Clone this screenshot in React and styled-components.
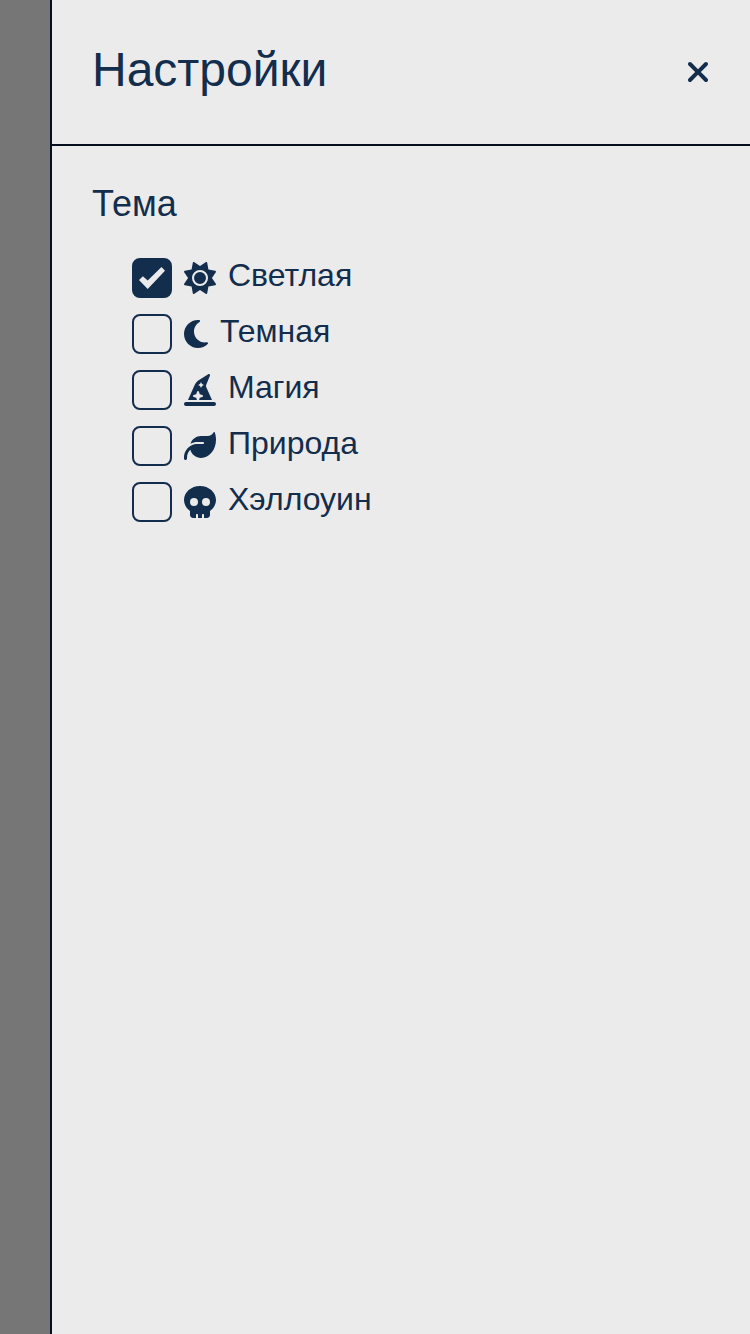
import React from "react";
import styled, { createGlobalStyle } from "styled-components";
import { FaSun, FaMoon, FaHatWizard, FaLeaf, FaSkull, FaXmark } from "react-icons/fa6";

const GlobalStyle = createGlobalStyle`
  * { box-sizing: border-box; }
  body {
    margin: 0;
    background: #767676;
    color: #132d4d;
    font-family: "Liberation Sans", Arial, sans-serif;
  }
`;

const Overlay = styled.div`
  display: flex;
  justify-content: flex-end;
  height: 100vh;
  background: #767676;
`;

const Panel = styled.aside`
  width: 700px;
  background: #ebebeb;
  border-left: 2px solid #050f20;
`;

const Header = styled.header`
  display: flex;
  align-items: flex-start;
  justify-content: space-between;
  height: 146px;
  padding: 40px;
  border-bottom: 2px solid #050f20;
`;

const Title = styled.h1`
  margin: 0;
  font-size: 48px;
  font-weight: 400;
  line-height: 60px;
`;

const CloseButton = styled.button`
  display: flex;
  margin: 16px 0 0;
  padding: 0;
  border: 0;
  background: none;
  color: inherit;

  svg {
    width: 24px;
    height: 32px;
  }
`;

const Section = styled.section`
  padding: 36px 40px;
`;

const SectionTitle = styled.h2`
  margin: 0 0 32px;
  font-size: 36px;
  font-weight: 400;
  line-height: 44px;
`;

const Options = styled.div`
  display: flex;
  flex-direction: column;
  gap: 16px;
  padding-left: 40px;
`;

const Option = styled.label`
  display: flex;
  align-items: center;
  gap: 12px;
  height: 40px;
`;

const Checkbox = styled.span`
  display: flex;
  width: 40px;
  height: 40px;
  border: 2px solid #132d4d;
  border-radius: 8px;
  background: ${({ $checked }) => ($checked ? "#132d4d" : "transparent")};
  color: #ebebeb;
`;

const OptionIcon = styled.span`
  display: flex;

  svg {
    width: ${({ $width }) => $width}px;
    height: 32px;
  }
`;

const OptionText = styled.span`
  font-size: 32px;
  line-height: 36px;
  padding-bottom: 7px;
`;

const themes = [
  { name: "Светлая", icon: FaSun, width: 32, checked: true },
  { name: "Темная", icon: FaMoon, width: 24 },
  { name: "Магия", icon: FaHatWizard, width: 32 },
  { name: "Природа", icon: FaLeaf, width: 32 },
  { name: "Хэллоуин", icon: FaSkull, width: 32 },
];

const CheckMark = () => (
  <svg width="36" height="36" viewBox="0 0 36 36" fill="currentColor">
    <path d="M5 20.1 8.9 16.2 13.7 20.4 27.5 7 31 10.8 13.7 29Z" />
  </svg>
);

export default function App() {
  return (
    <>
      <GlobalStyle />
      <Overlay>
        <Panel>
          <Header>
            <Title>Настройки</Title>
            <CloseButton aria-label="Закрыть">
              <FaXmark />
            </CloseButton>
          </Header>
          <Section>
            <SectionTitle>Тема</SectionTitle>
            <Options>
              {themes.map(({ name, icon: Icon, width, checked }) => (
                <Option key={name}>
                  <Checkbox $checked={checked}>{checked && <CheckMark />}</Checkbox>
                  <OptionIcon $width={width}>
                    <Icon />
                  </OptionIcon>
                  <OptionText>{name}</OptionText>
                </Option>
              ))}
            </Options>
          </Section>
        </Panel>
      </Overlay>
    </>
  );
}
